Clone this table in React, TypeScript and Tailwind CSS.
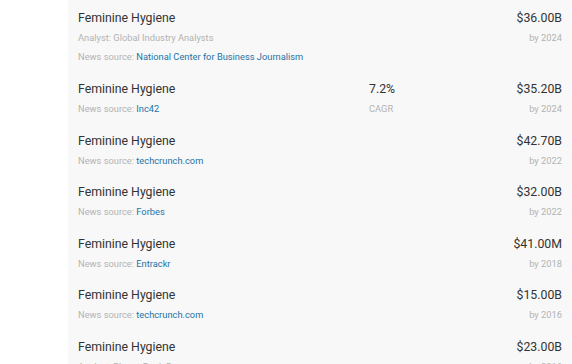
type Forecast = {
  title: string;
  analyst?: string;
  source: string;
  rate?: string;
  value: string;
  year: string;
};

const forecasts: Forecast[] = [
  {
    title: "Feminine Hygiene",
    analyst: "Global Industry Analysts",
    source: "National Center for Business Journalism",
    value: "$36.00B",
    year: "2024",
  },
  { title: "Feminine Hygiene", source: "Inc42", rate: "7.2%", value: "$35.20B", year: "2024" },
  { title: "Feminine Hygiene", source: "techcrunch.com", value: "$42.70B", year: "2022" },
  { title: "Feminine Hygiene", source: "Forbes", value: "$32.00B", year: "2022" },
  { title: "Feminine Hygiene", source: "Entrackr", value: "$41.00M", year: "2018" },
  { title: "Feminine Hygiene", source: "techcrunch.com", value: "$15.00B", year: "2016" },
  {
    title: "Feminine Hygiene",
    analyst: "Bharat Book Bureau",
    source: "Business Standard",
    value: "$23.00B",
    year: "2016",
  },
];

function ForecastRow({ item }: { item: Forecast }) {
  return (
    <div className="grid grid-cols-[291px_1fr_auto] py-[6.8px]">
      <div className="flex flex-col">
        <div className="text-[12.3px] leading-[19px] text-[#333]">{item.title}</div>
        {item.analyst && (
          <div className="text-[9.3px] leading-[19px] text-[#b3b3b3]">Analyst: {item.analyst}</div>
        )}
        <div className="text-[9.3px] leading-[19px] text-[#b3b3b3]">
          News source: <span className="text-[#2573a7]">{item.source}</span>
        </div>
      </div>
      <div className="flex flex-col">
        {item.rate && (
          <>
            <div className="text-[12.3px] leading-[19px] text-[#333]">{item.rate}</div>
            <div className="text-[9.3px] leading-[19px] text-[#b3b3b3]">CAGR</div>
          </>
        )}
      </div>
      <div className="flex flex-col items-end">
        <div className="text-[12.3px] leading-[19px] text-[#333]">{item.value}</div>
        <div className="text-[9.3px] leading-[19px] text-[#b3b3b3]">by {item.year}</div>
      </div>
    </div>
  );
}

export default function App() {
  return (
    <div className="h-[364px] w-[572px] overflow-hidden bg-white font-['Roboto',sans-serif]">
      <div className="ml-[68px] h-full bg-[#f8f8f8] pl-[10px] pr-[10px] pt-[2.7px]">
        {forecasts.map((f, i) => (
          <ForecastRow key={i} item={f} />
        ))}
      </div>
    </div>
  );
}
